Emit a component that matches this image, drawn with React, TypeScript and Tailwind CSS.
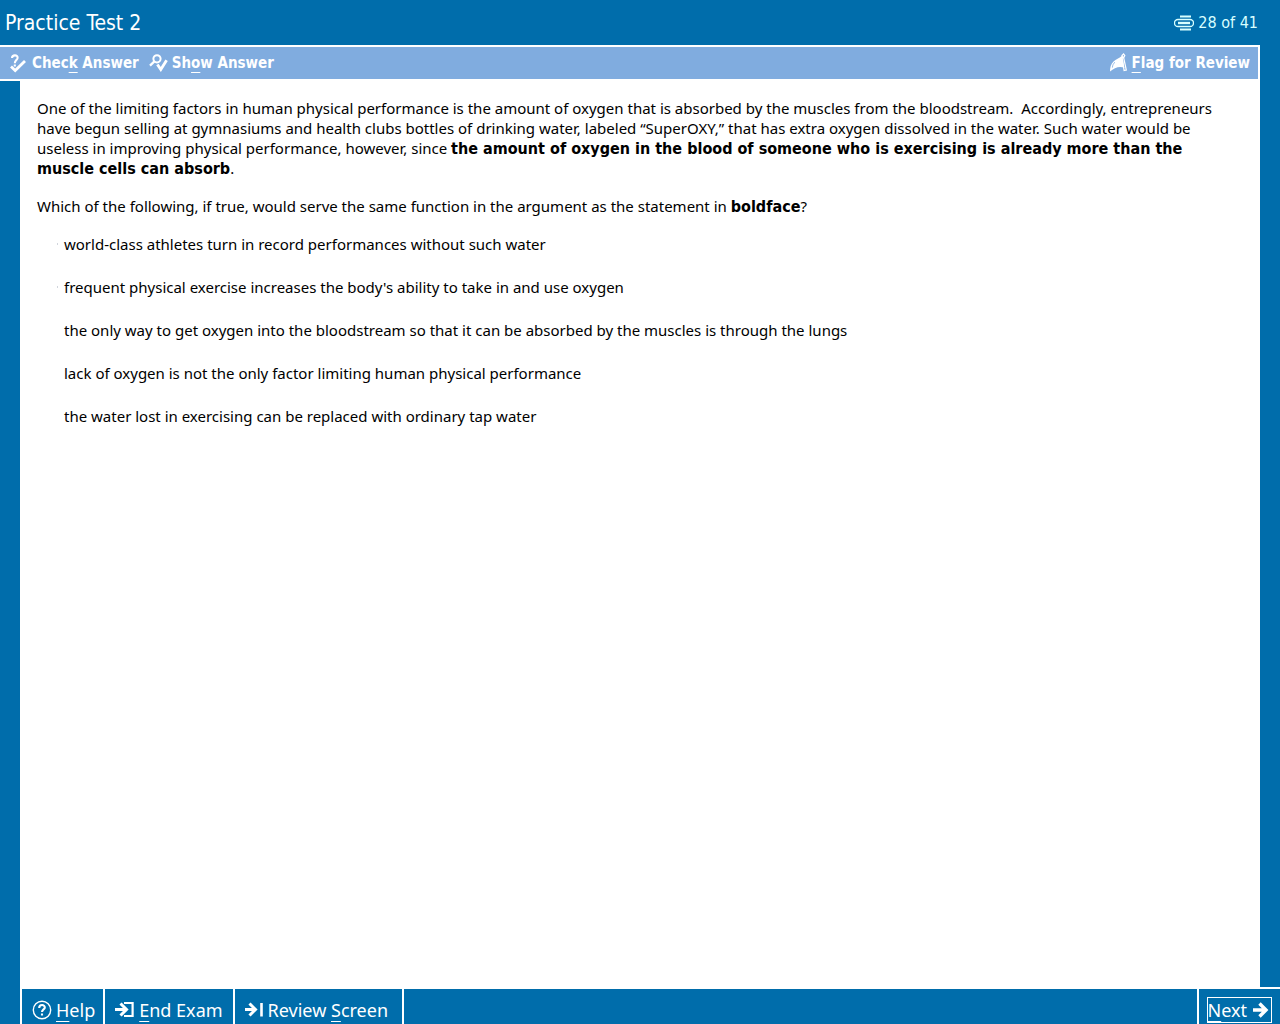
import { ReactNode } from "react";

const OPTIONS = [
  { id: "a", text: "world-class athletes turn in record performances without such water", dot: true },
  { id: "b", text: "frequent physical exercise increases the body's ability to take in and use oxygen", dot: true },
  { id: "c", text: "the only way to get oxygen into the bloodstream so that it can be absorbed by the muscles is through the lungs" },
  { id: "d", text: "lack of oxygen is not the only factor limiting human physical performance" },
  { id: "e", text: "the water lost in exercising can be replaced with ordinary tap water" },
];

const Key = ({ children }: { children: ReactNode }) => (
  <span className="underline decoration-1 underline-offset-4">{children}</span>
);

const Strong = ({ children }: { children: ReactNode }) => (
  <b className="font-['DejaVu_Sans_Condensed','DejaVu_Sans',sans-serif] text-base leading-none">{children}</b>
);

const PagesIcon = () => (
  <svg width="20" height="16" viewBox="0 0 20 16" fill="none" stroke="#d8ffff">
    <path d="M6 1.5h11M6 14.5h11" strokeWidth="2" />
    <path d="M6 11.5H4a3.3 3.3 0 0 1 0-7h12a3.4 3.4 0 0 1 0 7H6" strokeWidth="1.3" />
    <path d="M4 8h12" strokeWidth="2.4" />
  </svg>
);

const CheckAnswerIcon = () => (
  <svg width="16" height="19" viewBox="0 0 16 19" fill="none" stroke="white">
    <path d="M2 4C2.2 .4 8 .6 7.6 4 7.4 6 4.8 6.4 4.8 9.2M4.8 10.4v2" strokeWidth="2.1" />
    <path d="M1 12.5 5.2 16.5 15 7" strokeWidth="2.8" />
  </svg>
);

const ShowAnswerIcon = () => (
  <svg width="19" height="18" viewBox="0 0 19 18" fill="none" stroke="white">
    <circle cx="8" cy="4.8" r="3.6" strokeWidth="2" />
    <path d="M5.4 7.4 1 11.6" strokeWidth="2.3" />
    <path d="M8.4 10.5 11.8 15.5 17.6 6.2" strokeWidth="2.8" />
  </svg>
);

const FlagIcon = () => (
  <svg width="19" height="20" viewBox="0 0 19 20">
    <path d="M1 18.5C1 14 2 11 4.5 8.5 7 6 10 5.8 13 2.8L15.5 15C11 12.5 5.5 14.5 1 18.5Z" fill="white" />
    <path d="M13 2.5 14.6 1l1.2 1.6L14.6 5ZM14.5 4l2.8 13-2.2.5L13 4" fill="none" stroke="white" strokeWidth="1.2" />
    <path d="M3.4 14.6c.2-2.6 1-4.2 2.6-5.4" fill="none" stroke="#80acdf" strokeWidth=".8" />
  </svg>
);

const HelpIcon = () => (
  <svg width="20" height="20" viewBox="0 0 20 20" fill="none" stroke="white">
    <circle cx="10" cy="10" r="8.7" strokeWidth="1.4" />
    <path d="M7.2 8c0-4 5.8-3.7 5.6-.4C12.7 9.4 10 9.6 10 12M10 13.4v2" strokeWidth="2.1" />
  </svg>
);

const EndIcon = () => (
  <svg width="20" height="18" viewBox="0 0 20 18" fill="none" stroke="white">
    <path d="M9 2h8.6v13H9" strokeWidth="2.2" />
    <path d="M0 8.5h11M5.5 2.5l6 6-6 6" strokeWidth="3" />
  </svg>
);

const ReviewIcon = () => (
  <svg width="19" height="18" viewBox="0 0 19 18" fill="none" stroke="white">
    <path d="M0 8.5h10M4.5 2.5l6 6-6 6" strokeWidth="3" />
    <path d="M16.5 2v13.5" strokeWidth="2.6" />
  </svg>
);

const NextIcon = () => (
  <svg width="16" height="18" viewBox="0 0 16 18" fill="none" stroke="white" strokeWidth="3.4">
    <path d="M0 9h13M6.5 2.5 13 9l-6.5 6.5" />
  </svg>
);

export default function App() {
  return (
    <div className="flex min-h-screen flex-col bg-[#006dab] font-['Noto_Sans',sans-serif] text-white">
      <header className="flex h-[45px] items-center justify-between pr-[22px] pl-[5px] font-['DejaVu_Sans_Condensed','DejaVu_Sans',sans-serif]">
        <h1 className="text-[21px] leading-7">Practice Test 2</h1>
        <div className="flex items-center gap-1 text-base text-[#d8ffff]">
          <PagesIcon />
          <span>28 of 41</span>
        </div>
      </header>

      <div className="mr-5 flex h-9 items-center justify-between border-y-2 border-r-2 border-white bg-[#80acdf] pr-2 pl-2.5 font-['DejaVu_Sans_Condensed','DejaVu_Sans',sans-serif] text-[15px] font-semibold">
        <div className="flex items-center gap-2.5">
          <button className="flex items-center gap-1.5">
            <CheckAnswerIcon />
            <span>Chec<Key>k</Key> Answer</span>
          </button>
          <button className="flex items-center gap-1">
            <ShowAnswerIcon />
            <span>Sh<Key>o</Key>w Answer</span>
          </button>
        </div>
        <button className="flex items-center gap-1">
          <FlagIcon />
          <span><Key>F</Key>lag for Review</span>
        </button>
      </div>

      <main className="mx-5 grow bg-white px-[17px] pt-[17px] text-[15px] leading-5 text-black">
        <p>
          One of the limiting factors in human physical performance is the amount of oxygen that is absorbed by the muscles from the bloodstream.&nbsp; Accordingly, entrepreneurs
          <br />
          have begun selling at gymnasiums and health clubs bottles of drinking water, labeled “SuperOXY,” that has extra oxygen dissolved in the water. Such water would be
          <br />
          useless in improving physical performance, however, since{" "}
          <Strong>
            the amount of oxygen in the blood of someone who is exercising is already more than the
            <br />
            muscle cells can absorb
          </Strong>
          .
        </p>
        <p className="mt-[18px]">
          Which of the following, if true, would serve the same function in the argument as the statement in <Strong>boldface</Strong>?
        </p>
        <div className="mt-[18px] ml-5 flex flex-col gap-[23px]">
          {OPTIONS.map((o) => (
            <label key={o.id} className="flex items-center gap-1.5">
              <input
                type="radio"
                name="answer"
                value={o.id}
                className={`h-0.5 w-px appearance-none ${o.dot ? "bg-gray-300" : "bg-white"}`}
              />
              <span>{o.text}</span>
            </label>
          ))}
        </div>
      </main>

      <footer className="ml-5 flex h-[37px] justify-between border-t-2 border-white text-lg">
        <nav className="flex border-l-2 border-white">
          <button className="flex items-center gap-1 border-r-2 border-white pt-1.5 pr-2 pl-2.5">
            <HelpIcon />
            <span><Key>H</Key>elp</span>
          </button>
          <button className="flex items-center gap-1 border-r-2 border-white px-2.5 pt-1.5">
            <EndIcon />
            <span><Key>E</Key>nd Exam</span>
          </button>
          <button className="flex items-center gap-1 border-r-2 border-white pt-1.5 pr-3.5 pl-2.5">
            <ReviewIcon />
            <span>Review <Key>S</Key>creen</span>
          </button>
        </nav>
        <div className="flex border-l-2 border-white pt-2 pr-2 pl-2">
          <button className="flex h-[26px] items-center gap-1.5 border border-white pr-0.5">
            <span><Key>N</Key>ext</span>
            <NextIcon />
          </button>
        </div>
      </footer>
    </div>
  );
}
